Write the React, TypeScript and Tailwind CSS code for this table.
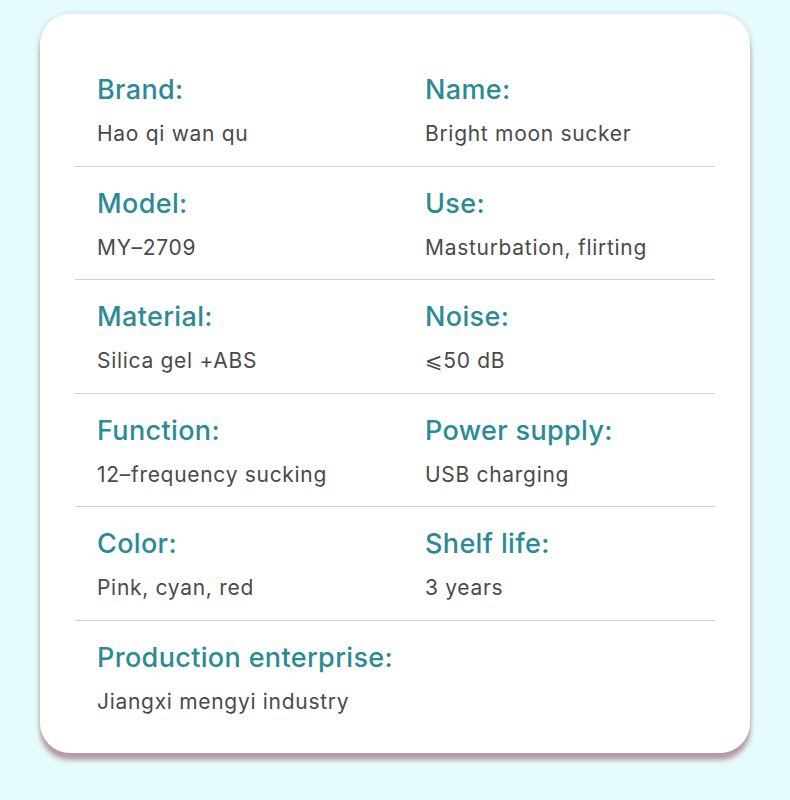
const rows: [string, string, string?, string?][] = [
  ['Brand:', 'Hao qi wan qu', 'Name:', 'Bright moon sucker'],
  ['Model:', 'MY–2709', 'Use:', 'Masturbation, flirting'],
  ['Material:', 'Silica gel +ABS', 'Noise:', '⩽50 dB'],
  ['Function:', '12–frequency sucking', 'Power supply:', 'USB charging'],
  ['Color:', 'Pink, cyan, red', 'Shelf life:', '3 years'],
  ['Production enterprise:', 'Jiangxi mengyi industry'],
];

const Cell = ({ label, value }: { label?: string; value?: string }) => (
  <div className="flex flex-col">
    {label && (
      <div className="text-[27px] leading-[30px] font-medium tracking-[0.35px] text-[#2a8b96]">
        {label}
      </div>
    )}
    {value && (
      <div className="mt-[15px] text-[21px] leading-[28px] tracking-[0.7px] text-[#4a4a4a]">
        {value}
      </div>
    )}
  </div>
);

export default function App() {
  return (
    <div
      className="w-[790px] h-[800px] bg-[#e6fcfc] pt-[14px] px-[40px]"
      style={{ fontFamily: 'Inter, "DejaVu Sans", "Noto Sans CJK SC", sans-serif' }}
    >
      <div className="bg-white rounded-[30px] pt-[39px] pb-[37px] px-[35px] shadow-[0_7px_5px_rgba(170,120,135,0.75),0_0_6px_rgba(0,0,0,0.12)]">
        {rows.map((r, i) => (
          <div
            key={i}
            className={
              'grid grid-cols-[328px_1fr] pl-[22px] pt-[22px] ' +
              (i < rows.length - 1 ? 'pb-[17.6px] border-b border-[#d0d0d0]' : '')
            }
          >
            <Cell label={r[0]} value={r[1]} />
            <Cell label={r[2]} value={r[3]} />
          </div>
        ))}
      </div>
    </div>
  );
}
